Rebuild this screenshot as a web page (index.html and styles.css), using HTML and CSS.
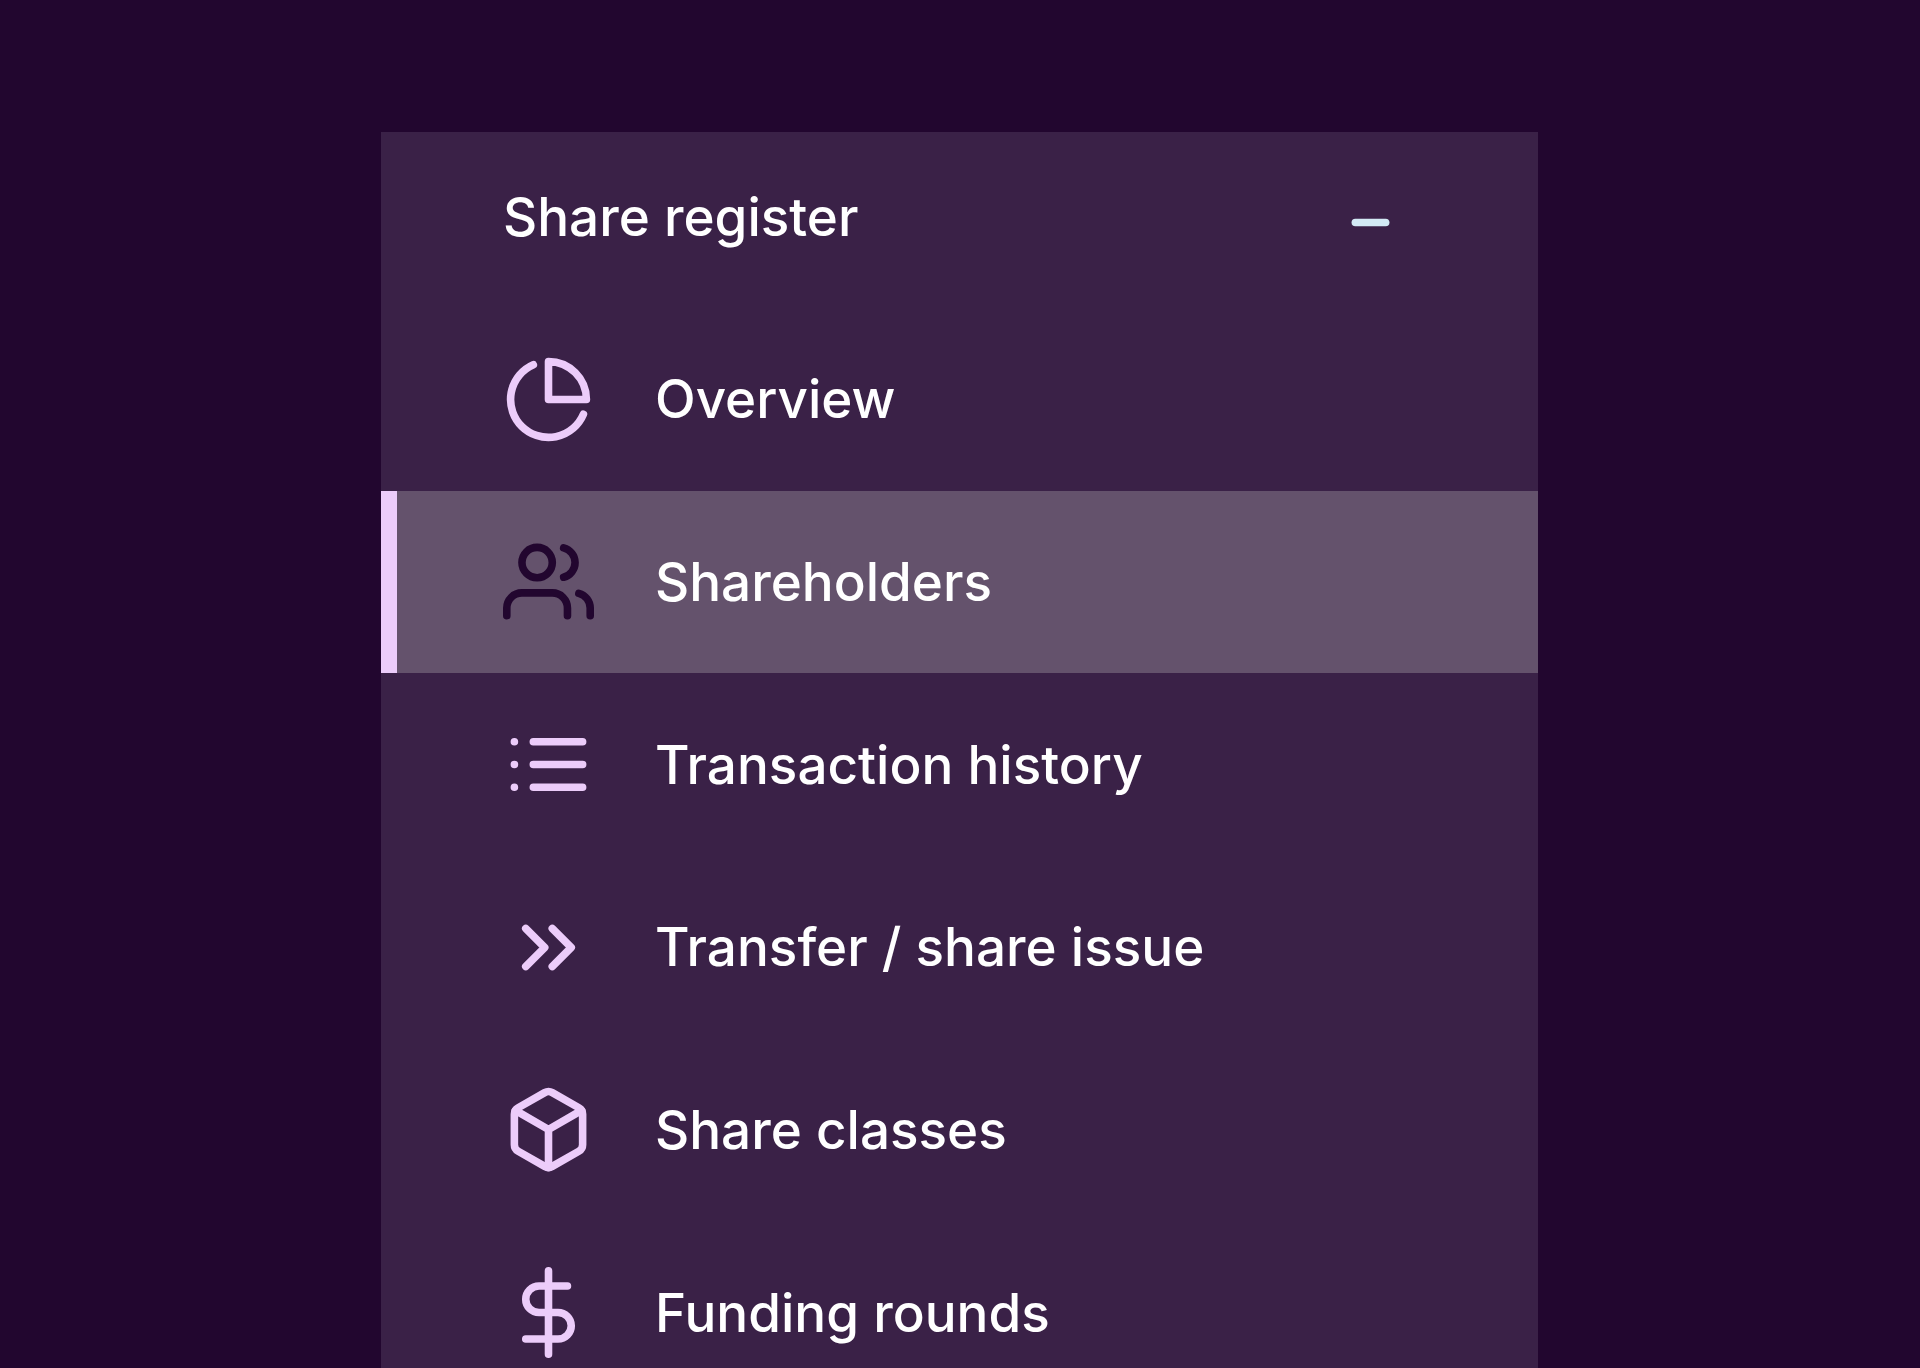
FILE: index.html
```html
<!DOCTYPE html>
<html lang="en">
<head>
  <meta charset="utf-8">
  <meta name="viewport" content="width=device-width, initial-scale=1">
  <title>Share register</title>
  <link rel="stylesheet" href="styles.css">
</head>
<body>
  <nav class="panel" aria-label="Share register">
    <button class="panel-header" type="button" aria-expanded="true" aria-controls="menu">
      <span class="panel-title">Share register</span>
      <svg class="icon icon-toggle" viewBox="0 0 24 24" aria-hidden="true"><path d="M8 12h8"/></svg>
    </button>
    <ul class="menu" id="menu">
      <li>
        <a class="item" href="#overview">
          <svg class="icon" viewBox="0 0 24 24" aria-hidden="true"><path d="M21.21 15.89A10 10 0 1 1 8 2.83"/><path d="M22 12A10 10 0 0 0 12 2v10z"/></svg>
          <span>Overview</span>
        </a>
      </li>
      <li>
        <a class="item item-active" href="#shareholders" aria-current="page">
          <svg class="icon" viewBox="0 0 24 24" aria-hidden="true"><path d="M17 21v-2a4 4 0 0 0-4-4H5a4 4 0 0 0-4 4v2"/><circle cx="9" cy="7" r="4"/><path d="M23 21v-2a4 4 0 0 0-3-3.87"/><path d="M16 3.13a4 4 0 0 1 0 7.75"/></svg>
          <span>Shareholders</span>
        </a>
      </li>
      <li>
        <a class="item" href="#history">
          <svg class="icon" viewBox="0 0 24 24" aria-hidden="true"><path d="M8 6h13M8 12h13M8 18h13M3 6h.01M3 12h.01M3 18h.01"/></svg>
          <span>Transaction history</span>
        </a>
      </li>
      <li>
        <a class="item" href="#transfer">
          <svg class="icon" viewBox="0 0 24 24" aria-hidden="true"><path d="M13 17l5-5-5-5M6 17l5-5-5-5"/></svg>
          <span>Transfer / share issue</span>
        </a>
      </li>
      <li>
        <a class="item" href="#classes">
          <svg class="icon" viewBox="0 0 24 24" aria-hidden="true"><path d="M21 16V8a2 2 0 0 0-1-1.73l-7-4a2 2 0 0 0-2 0l-7 4A2 2 0 0 0 3 8v8a2 2 0 0 0 1 1.73l7 4a2 2 0 0 0 2 0l7-4A2 2 0 0 0 21 16z"/><path d="M3.27 6.96L12 12.01l8.73-5.05M12 22.08V12"/></svg>
          <span>Share classes</span>
        </a>
      </li>
      <li>
        <a class="item" href="#rounds">
          <svg class="icon" viewBox="0 0 24 24" aria-hidden="true"><path d="M12 1v22M17 5H9.500a3.500 3.500 0 0 0 0 7h5a3.500 3.500 0 0 1 0 7H6"/></svg>
          <span>Funding rounds</span>
        </a>
      </li>
    </ul>
  </nav>
</body>
</html>
```
FILE: styles.css
```css
* {
  box-sizing: border-box;
}

body {
  margin: 0;
  height: 100vh;
  padding: 132px 382px 0 381px;
  overflow: hidden;
  background: #22062f;
  color: #fff;
  font: 500 53px/64px Inter, "Liberation Sans", sans-serif;
}

.panel {
  background: #3a2147;
}

.panel-header {
  display: flex;
  align-items: flex-start;
  justify-content: space-between;
  width: 100%;
  padding: 45px 122px 40px;
  border: 0;
  background: none;
  color: inherit;
  font: inherit;
  text-align: left;
}

.panel-title {
  line-height: 80px;
}

.menu {
  display: grid;
  grid-template-rows: repeat(6, 1fr);
  height: 1096px;
  margin: 0;
  padding: 0;
  list-style: none;
}

.item {
  display: flex;
  align-items: center;
  gap: 61px;
  height: 100%;
  padding: 0 122px 0 106px;
  border-left: 16px solid transparent;
  color: inherit;
  text-decoration: none;
}

.item-active {
  border-left-color: #ecccfa;
  background: #64526c;
}

.icon {
  flex: none;
  width: 91px;
  height: 91px;
  fill: none;
  stroke: #ecccfa;
  stroke-width: 2;
  stroke-linecap: round;
  stroke-linejoin: round;
}

.icon-toggle {
  stroke: #d3eaf5;
}

.item-active .icon {
  stroke: #22062f;
}
```
